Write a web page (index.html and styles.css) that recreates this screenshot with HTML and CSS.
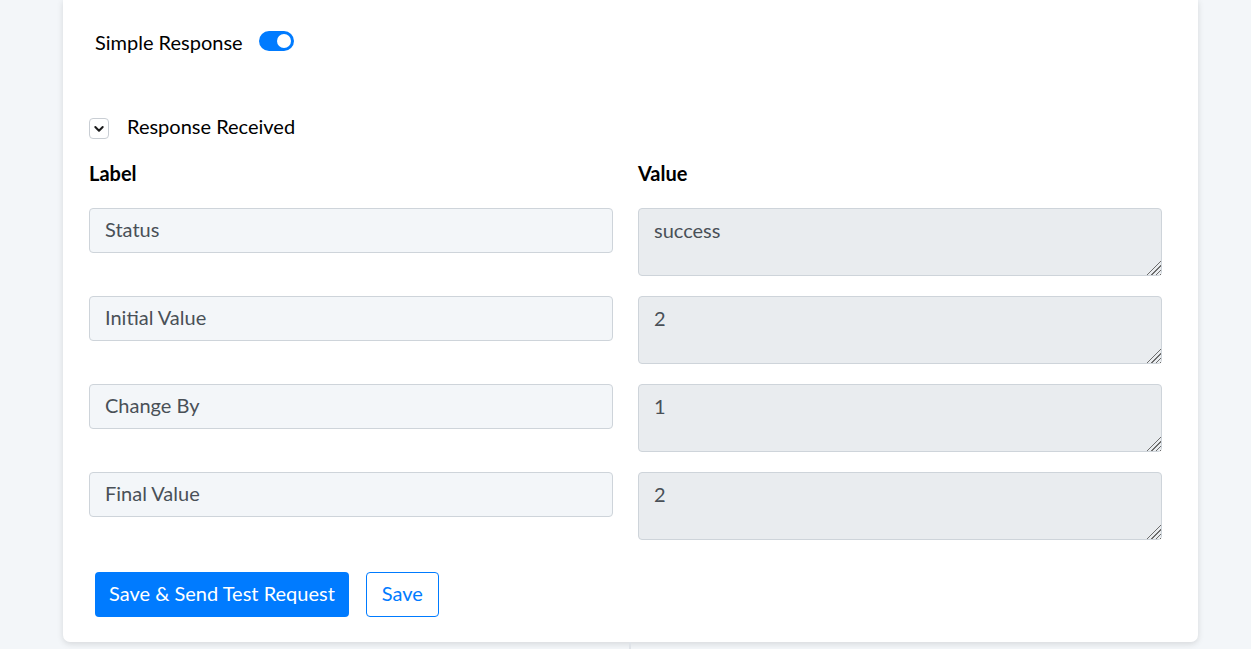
FILE: index.html
```html
<!DOCTYPE html>
<html lang="en">
<head>
    <meta charset="UTF-8">
    <meta name="viewport" content="width=device-width, initial-scale=1.0">
    <title>Response Mapping</title>
    <link rel="stylesheet" href="styles.css">
</head>
<body>
    <div class="page">
        <div class="card">
            <!-- Simple response switch -->
            <div class="switch-row">
                <span class="switch-label">Simple Response</span>
                <span class="switch on"><span class="knob"></span></span>
            </div>

            <!-- Response received section -->
            <div class="section-head">
                <span class="chevron-box">
                    <svg width="12" height="12" viewBox="0 0 12 12"><path d="M2.3 4 L6 7.7 L9.7 4" fill="none" stroke="#1a1a1a" stroke-width="2" stroke-linecap="round" stroke-linejoin="round"/></svg>
                </span>
                <span class="section-title">Response Received</span>
            </div>

            <div class="grid">
                <div class="col-head">Label</div>
                <div class="col-head">Value</div>

                <input class="label-input" type="text" value="Status">
                <textarea class="value-input" readonly>success</textarea>

                <input class="label-input" type="text" value="Initial Value">
                <textarea class="value-input" readonly>2</textarea>

                <input class="label-input" type="text" value="Change By">
                <textarea class="value-input" readonly>1</textarea>

                <input class="label-input" type="text" value="Final Value">
                <textarea class="value-input" readonly>2</textarea>
            </div>

            <div class="actions">
                <button class="btn btn-primary">Save &amp; Send Test Request</button>
                <button class="btn btn-outline">Save</button>
            </div>
        </div>
        <div class="divider"></div>
    </div>
</body>
</html>
```

FILE: styles.css
```css
body {
    margin: 0;
    padding: 0;
    background-color: #f3f6f9;
    font-family: Lato, "Open Sans", sans-serif;
    font-size: 20px;
    color: #000;
}
.page {
    padding: 0 53px 0 63px;
}
.card {
    background: #fff;
    border-radius: 0 0 7px 7px;
    box-shadow: 0 2px 6px rgba(0, 0, 0, 0.12);
    padding: 32px 36px 25px 26px;
    margin-top: -1px;
}
.switch-row {
    display: flex;
    align-items: center;
    padding-left: 6px;
    height: 24px;
}
.switch-label, .section-title {
    margin-top: -2px;
}
.switch {
    position: relative;
    width: 35px;
    height: 20px;
    margin-left: 16px;
    margin-top: -4px;
    border-radius: 10px;
    background: #007bff;
}
.knob {
    position: absolute;
    top: 3px;
    right: 3px;
    width: 14px;
    height: 14px;
    border-radius: 50%;
    background: #fff;
}
.section-head {
    display: flex;
    align-items: center;
    margin-top: 60px;
    height: 24px;
}
.chevron-box {
    display: flex;
    align-items: center;
    justify-content: center;
    width: 18px;
    height: 19px;
    border: 1px solid #c9ced4;
    border-radius: 4px;
    margin-top: 3px;
}
.section-title {
    margin-left: 18px;
}
.grid {
    display: grid;
    grid-template-columns: 524px 524px;
    column-gap: 25px;
    row-gap: 20px;
    align-items: start;
    margin-top: 23px;
}
.col-head {
    font-weight: bold;
    line-height: 22px;
    margin-bottom: 4px;
}
.label-input, .value-input {
    box-sizing: border-box;
    width: 100%;
    font-family: inherit;
    font-size: 20px;
    color: #495057;
    border: 1px solid #ced4da;
    border-radius: 4px;
    padding: 10px 15px;
    margin: 0;
}
.label-input {
    height: 45px;
    padding-top: 8px;
    padding-bottom: 11px;
    background: #f3f6f9;
}
.value-input {
    height: 68px;
    background: #e9ecef;
    resize: vertical;
    line-height: 22px;
}
.value-input::-webkit-resizer {
    background:
        linear-gradient(135deg, #e9ecef 52%, transparent 52%),
        repeating-linear-gradient(135deg, #e9ecef 0 2px, #6c6c6c 2px 3px);
}
.actions {
    display: flex;
    gap: 17px;
    margin-top: 32px;
    padding-left: 6px;
}
.btn {
    height: 45px;
    font-family: inherit;
    font-size: 20px;
    border-radius: 4px;
    padding: 0 14px 3px;
    cursor: pointer;
}
.btn-primary {
    background: #007bff;
    color: #fff;
    border: none;
}
.btn-outline {
    background: #fff;
    color: #007bff;
    border: 1px solid #007bff;
    padding: 0 15px 3px;
}
.divider {
    width: 2px;
    height: 10px;
    margin-left: 566px;
    background: #dfe3e8;
}
```
